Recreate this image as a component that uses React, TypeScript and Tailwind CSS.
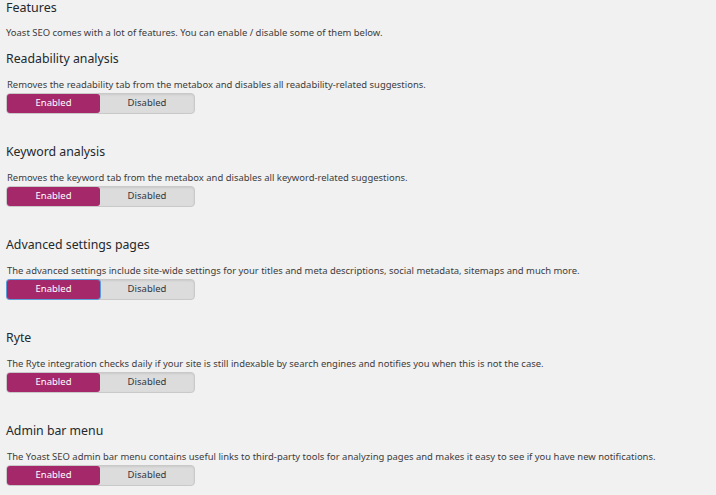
import React from "react";

const sections = [
  {
    title: "Readability analysis",
    desc: "Removes the readability tab from the metabox and disables all readability-related suggestions.",
  },
  {
    title: "Keyword analysis",
    desc: "Removes the keyword tab from the metabox and disables all keyword-related suggestions.",
  },
  {
    title: "Advanced settings pages",
    desc: "The advanced settings include site-wide settings for your titles and meta descriptions, social metadata, sitemaps and much more.",
    focus: true,
  },
  {
    title: "Ryte",
    desc: "The Ryte integration checks daily if your site is still indexable by search engines and notifies you when this is not the case.",
  },
  {
    title: "Admin bar menu",
    desc: "The Yoast SEO admin bar menu contains useful links to third-party tools for analyzing pages and makes it easy to see if you have new notifications.",
  },
];

function Toggle({ focus }: { focus?: boolean }) {
  return (
    <div className="flex h-[21px] w-[189px] rounded-[4px] border border-[#c9c9c9] bg-[#dcdcdc] shadow-[inset_0_1px_2px_rgba(0,0,0,0.08)]">
      <div
        className={
          focus
            ? "flex w-[93px] items-center justify-center rounded-[3px] bg-[#a4286a] text-[9.5px] text-white ring-1 ring-[#5b9dd9]"
            : "flex w-[93px] items-center justify-center rounded-[3px] bg-[#a4286a] text-[9.5px] text-white"
        }
      >
        Enabled
      </div>
      <div className="flex flex-1 items-center justify-center text-[9.5px] text-[#32373c]">Disabled</div>
    </div>
  );
}

export default function App() {
  return (
    <div
      className="min-h-[495px] w-[716px] bg-[#f1f1f1] pl-[6px] text-[#23282d]"
      style={{ fontFamily: '"Noto Sans", sans-serif' }}
    >
      <h2 className="text-[12.5px] leading-[15px]">Features</h2>
      <p className="mt-[12px] text-[9.45px] leading-[12px] text-[#3c3c3c]">
        Yoast SEO comes with a lot of features. You can enable / disable some of them below.
      </p>
      {sections.map((s, i) => (
        <div key={s.title} className={i === 0 ? "mt-[12px]" : "mt-[30px]"}>
          <h3 className="text-[12.3px] leading-[16px]">{s.title}</h3>
          <p className="mt-[12px] pl-px text-[9.45px] leading-[12px] text-[#3c3c3c]">{s.desc}</p>
          <div className="mt-[2px]">
            <Toggle focus={s.focus} />
          </div>
        </div>
      ))}
    </div>
  );
}
